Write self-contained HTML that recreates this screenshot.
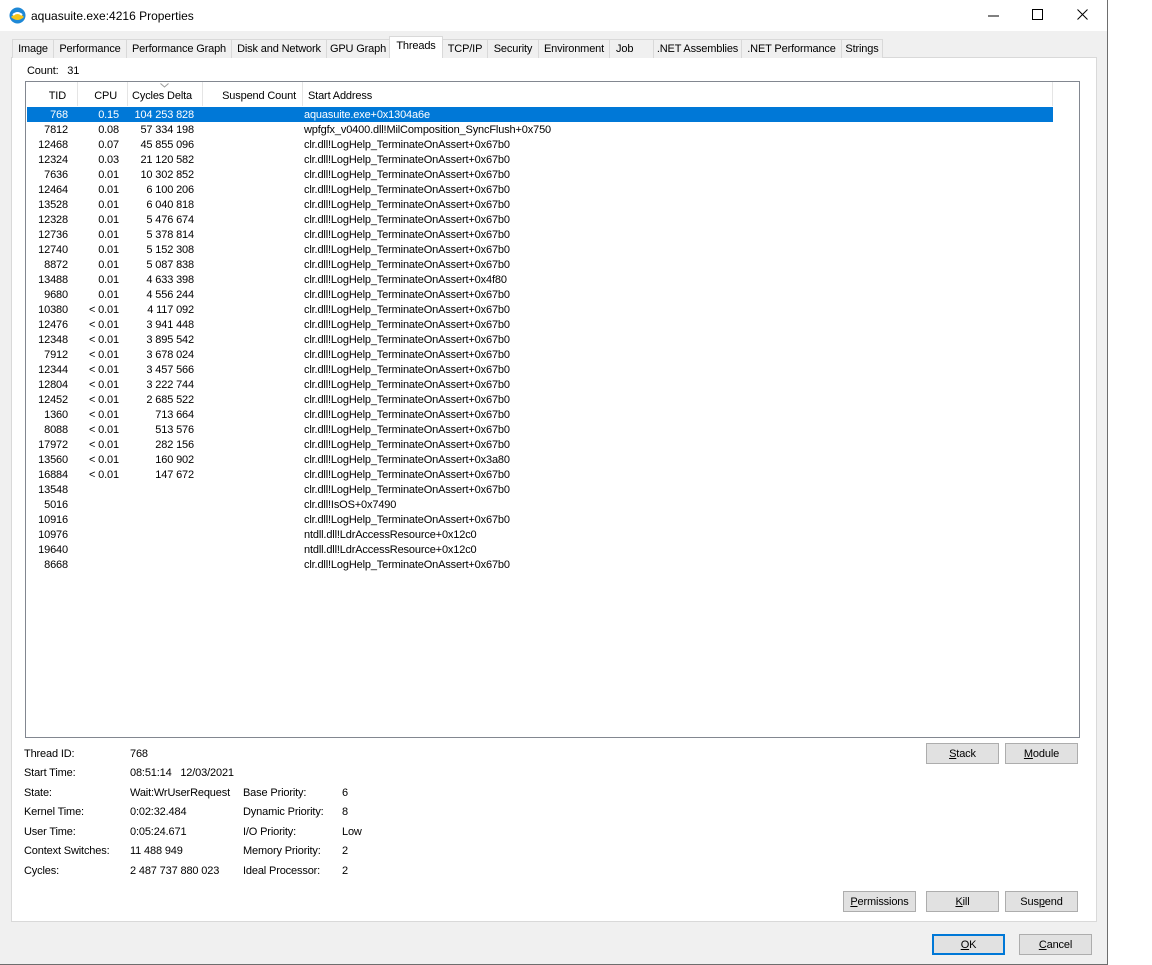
<!DOCTYPE html>
<html><head><meta charset="utf-8"><style>
*{margin:0;padding:0;box-sizing:border-box}
body{width:1152px;height:965px;background:#fff;font-family:"Liberation Sans",Tahoma,sans-serif;font-size:11px;letter-spacing:-0.15px;color:#000;position:relative;overflow:hidden}
.win{position:absolute;left:0;top:0;width:1108px;height:965px;background:#f0f0f0;border-right:1px solid #6e6e6e;border-bottom:1px solid #6e6e6e}
.title{position:absolute;left:0;top:0;width:1107px;height:31px;background:#fff}
.title .t{position:absolute;left:31px;top:9px;font-size:12px;letter-spacing:0}
.abs{position:absolute}
.tab{position:absolute;top:39px;height:19px;background:#f0f0f0;border:1px solid #d9d9d9;border-bottom:none;text-align:center;line-height:18px;white-space:nowrap}
.tab.sel{top:36px;height:22px;background:#fff;line-height:19px;z-index:2}
.panel{position:absolute;left:11px;top:57px;width:1086px;height:865px;background:#fff;border:1px solid #d9d9d9}
.list{position:absolute;left:25px;top:81px;width:1055px;height:657px;border:1px solid #828790;background:#fff;overflow:hidden}
.hs{position:absolute;top:0;width:1px;height:24px;background:#e5e5e5}
.h{position:absolute;top:8px;white-space:nowrap}
.r{position:absolute;left:1px;height:15px;width:1026px;white-space:nowrap}
.r span{position:absolute;top:2px}
.r .a{right:985px}.r .b{right:934px}.r .c{right:859px}.r .d{left:277px}
.r.s{background:#0078d7;color:#fff}
.btn{position:absolute;height:21px;background:#e1e1e1;border:1px solid #adadad;text-align:center;line-height:20px}
.lb{position:absolute;white-space:nowrap}
</style></head><body>
<div class="win">
<div class="title">
<svg class="abs" style="left:9px;top:7px" width="17" height="17" viewBox="0 0 17 17"><circle cx="8.5" cy="8.5" r="8" fill="#1e88d6"/><path d="M2 10 Q8.5 3 15 10 Q8.5 16 2 10Z" fill="#f5c518"/><path d="M4 8 Q8.5 4 13 8" stroke="#fff" stroke-width="2" fill="none"/></svg>
<div class="t">aquasuite.exe:4216 Properties</div>
<svg class="abs" style="left:988px;top:10px" width="12" height="12"><line x1="0" y1="6" x2="11" y2="6" stroke="#000"/></svg>
<svg class="abs" style="left:1032px;top:9px" width="12" height="12"><rect x="0.5" y="0.5" width="10" height="10" fill="none" stroke="#000"/></svg>
<svg class="abs" style="left:1077px;top:9px" width="12" height="12"><path d="M0.5 0.5L10.5 10.5M10.5 0.5L0.5 10.5" stroke="#000"/></svg>
</div>
<div class="panel"></div>
<div class="tab" style="left:12px;width:42px">Image</div>
<div class="tab" style="left:53px;width:74px">Performance</div>
<div class="tab" style="left:126px;width:106px">Performance Graph</div>
<div class="tab" style="left:231px;width:96px">Disk and Network</div>
<div class="tab" style="left:326px;width:64px">GPU Graph</div>
<div class="tab sel" style="left:389px;width:54px">Threads</div>
<div class="tab" style="left:442px;width:46px">TCP/IP</div>
<div class="tab" style="left:487px;width:52px">Security</div>
<div class="tab" style="left:538px;width:72px">Environment</div>
<div class="tab" style="left:609px;width:45px;text-align:left;padding-left:6px">Job</div>
<div class="tab" style="left:653px;width:89px">.NET Assemblies</div>
<div class="tab" style="left:741px;width:101px">.NET Performance</div>
<div class="tab" style="left:841px;width:42px">Strings</div>
<div class="lb" style="left:27px;top:65px">Count:&nbsp;&nbsp; 31</div>
<div class="list">
<div class="hs" style="left:51px"></div><div class="hs" style="left:101px"></div><div class="hs" style="left:176px"></div><div class="hs" style="left:276px"></div><div class="hs" style="left:1026px"></div>
<svg class="abs" style="left:134px;top:1px" width="9" height="5"><path d="M0.5 0.5L4.5 4L8.5 0.5" stroke="#999" fill="none"/></svg>
<div class="h" style="right:1013px">TID</div>
<div class="h" style="right:962px">CPU</div>
<div class="h" style="right:887px">Cycles Delta</div>
<div class="h" style="right:783px">Suspend Count</div>
<div class="h" style="left:282px">Start Address</div>
<div class="r s" style="top:25px"><span class="a">768</span><span class="b">0.15</span><span class="c">104 253 828</span><span class="d">aquasuite.exe+0x1304a6e</span></div>
<div class="r" style="top:40px"><span class="a">7812</span><span class="b">0.08</span><span class="c">57 334 198</span><span class="d">wpfgfx_v0400.dll!MilComposition_SyncFlush+0x750</span></div>
<div class="r" style="top:55px"><span class="a">12468</span><span class="b">0.07</span><span class="c">45 855 096</span><span class="d">clr.dll!LogHelp_TerminateOnAssert+0x67b0</span></div>
<div class="r" style="top:70px"><span class="a">12324</span><span class="b">0.03</span><span class="c">21 120 582</span><span class="d">clr.dll!LogHelp_TerminateOnAssert+0x67b0</span></div>
<div class="r" style="top:85px"><span class="a">7636</span><span class="b">0.01</span><span class="c">10 302 852</span><span class="d">clr.dll!LogHelp_TerminateOnAssert+0x67b0</span></div>
<div class="r" style="top:100px"><span class="a">12464</span><span class="b">0.01</span><span class="c">6 100 206</span><span class="d">clr.dll!LogHelp_TerminateOnAssert+0x67b0</span></div>
<div class="r" style="top:115px"><span class="a">13528</span><span class="b">0.01</span><span class="c">6 040 818</span><span class="d">clr.dll!LogHelp_TerminateOnAssert+0x67b0</span></div>
<div class="r" style="top:130px"><span class="a">12328</span><span class="b">0.01</span><span class="c">5 476 674</span><span class="d">clr.dll!LogHelp_TerminateOnAssert+0x67b0</span></div>
<div class="r" style="top:145px"><span class="a">12736</span><span class="b">0.01</span><span class="c">5 378 814</span><span class="d">clr.dll!LogHelp_TerminateOnAssert+0x67b0</span></div>
<div class="r" style="top:160px"><span class="a">12740</span><span class="b">0.01</span><span class="c">5 152 308</span><span class="d">clr.dll!LogHelp_TerminateOnAssert+0x67b0</span></div>
<div class="r" style="top:175px"><span class="a">8872</span><span class="b">0.01</span><span class="c">5 087 838</span><span class="d">clr.dll!LogHelp_TerminateOnAssert+0x67b0</span></div>
<div class="r" style="top:190px"><span class="a">13488</span><span class="b">0.01</span><span class="c">4 633 398</span><span class="d">clr.dll!LogHelp_TerminateOnAssert+0x4f80</span></div>
<div class="r" style="top:205px"><span class="a">9680</span><span class="b">0.01</span><span class="c">4 556 244</span><span class="d">clr.dll!LogHelp_TerminateOnAssert+0x67b0</span></div>
<div class="r" style="top:220px"><span class="a">10380</span><span class="b">&lt; 0.01</span><span class="c">4 117 092</span><span class="d">clr.dll!LogHelp_TerminateOnAssert+0x67b0</span></div>
<div class="r" style="top:235px"><span class="a">12476</span><span class="b">&lt; 0.01</span><span class="c">3 941 448</span><span class="d">clr.dll!LogHelp_TerminateOnAssert+0x67b0</span></div>
<div class="r" style="top:250px"><span class="a">12348</span><span class="b">&lt; 0.01</span><span class="c">3 895 542</span><span class="d">clr.dll!LogHelp_TerminateOnAssert+0x67b0</span></div>
<div class="r" style="top:265px"><span class="a">7912</span><span class="b">&lt; 0.01</span><span class="c">3 678 024</span><span class="d">clr.dll!LogHelp_TerminateOnAssert+0x67b0</span></div>
<div class="r" style="top:280px"><span class="a">12344</span><span class="b">&lt; 0.01</span><span class="c">3 457 566</span><span class="d">clr.dll!LogHelp_TerminateOnAssert+0x67b0</span></div>
<div class="r" style="top:295px"><span class="a">12804</span><span class="b">&lt; 0.01</span><span class="c">3 222 744</span><span class="d">clr.dll!LogHelp_TerminateOnAssert+0x67b0</span></div>
<div class="r" style="top:310px"><span class="a">12452</span><span class="b">&lt; 0.01</span><span class="c">2 685 522</span><span class="d">clr.dll!LogHelp_TerminateOnAssert+0x67b0</span></div>
<div class="r" style="top:325px"><span class="a">1360</span><span class="b">&lt; 0.01</span><span class="c">713 664</span><span class="d">clr.dll!LogHelp_TerminateOnAssert+0x67b0</span></div>
<div class="r" style="top:340px"><span class="a">8088</span><span class="b">&lt; 0.01</span><span class="c">513 576</span><span class="d">clr.dll!LogHelp_TerminateOnAssert+0x67b0</span></div>
<div class="r" style="top:355px"><span class="a">17972</span><span class="b">&lt; 0.01</span><span class="c">282 156</span><span class="d">clr.dll!LogHelp_TerminateOnAssert+0x67b0</span></div>
<div class="r" style="top:370px"><span class="a">13560</span><span class="b">&lt; 0.01</span><span class="c">160 902</span><span class="d">clr.dll!LogHelp_TerminateOnAssert+0x3a80</span></div>
<div class="r" style="top:385px"><span class="a">16884</span><span class="b">&lt; 0.01</span><span class="c">147 672</span><span class="d">clr.dll!LogHelp_TerminateOnAssert+0x67b0</span></div>
<div class="r" style="top:400px"><span class="a">13548</span><span class="d">clr.dll!LogHelp_TerminateOnAssert+0x67b0</span></div>
<div class="r" style="top:415px"><span class="a">5016</span><span class="d">clr.dll!IsOS+0x7490</span></div>
<div class="r" style="top:430px"><span class="a">10916</span><span class="d">clr.dll!LogHelp_TerminateOnAssert+0x67b0</span></div>
<div class="r" style="top:445px"><span class="a">10976</span><span class="d">ntdll.dll!LdrAccessResource+0x12c0</span></div>
<div class="r" style="top:460px"><span class="a">19640</span><span class="d">ntdll.dll!LdrAccessResource+0x12c0</span></div>
<div class="r" style="top:475px"><span class="a">8668</span><span class="d">clr.dll!LogHelp_TerminateOnAssert+0x67b0</span></div>
</div>
<div class="lb" style="left:24px;top:748px">Thread ID:</div><div class="lb" style="left:130px;top:748px">768</div>
<div class="lb" style="left:24px;top:767px">Start Time:</div><div class="lb" style="left:130px;top:767px">08:51:14&nbsp;&nbsp; 12/03/2021</div>
<div class="lb" style="left:24px;top:787px">State:</div><div class="lb" style="left:130px;top:787px">Wait:WrUserRequest</div>
<div class="lb" style="left:24px;top:806px">Kernel Time:</div><div class="lb" style="left:130px;top:806px">0:02:32.484</div>
<div class="lb" style="left:24px;top:826px">User Time:</div><div class="lb" style="left:130px;top:826px">0:05:24.671</div>
<div class="lb" style="left:24px;top:845px">Context Switches:</div><div class="lb" style="left:130px;top:845px">11 488 949</div>
<div class="lb" style="left:24px;top:865px">Cycles:</div><div class="lb" style="left:130px;top:865px">2 487 737 880 023</div>
<div class="lb" style="left:243px;top:787px">Base Priority:</div><div class="lb" style="left:342px;top:787px">6</div>
<div class="lb" style="left:243px;top:806px">Dynamic Priority:</div><div class="lb" style="left:342px;top:806px">8</div>
<div class="lb" style="left:243px;top:826px">I/O Priority:</div><div class="lb" style="left:342px;top:826px">Low</div>
<div class="lb" style="left:243px;top:845px">Memory Priority:</div><div class="lb" style="left:342px;top:845px">2</div>
<div class="lb" style="left:243px;top:865px">Ideal Processor:</div><div class="lb" style="left:342px;top:865px">2</div>
<div class="btn" style="left:926px;top:743px;width:73px"><u>S</u>tack</div>
<div class="btn" style="left:1005px;top:743px;width:73px"><u>M</u>odule</div>
<div class="btn" style="left:843px;top:891px;width:73px"><u>P</u>ermissions</div>
<div class="btn" style="left:926px;top:891px;width:73px"><u>K</u>ill</div>
<div class="btn" style="left:1005px;top:891px;width:73px">Sus<u>p</u>end</div>
<div class="btn" style="left:932px;top:934px;width:73px;border:2px solid #0078d7;line-height:18px"><u>O</u>K</div>
<div class="btn" style="left:1019px;top:934px;width:73px"><u>C</u>ancel</div>
</div>
</body></html>
